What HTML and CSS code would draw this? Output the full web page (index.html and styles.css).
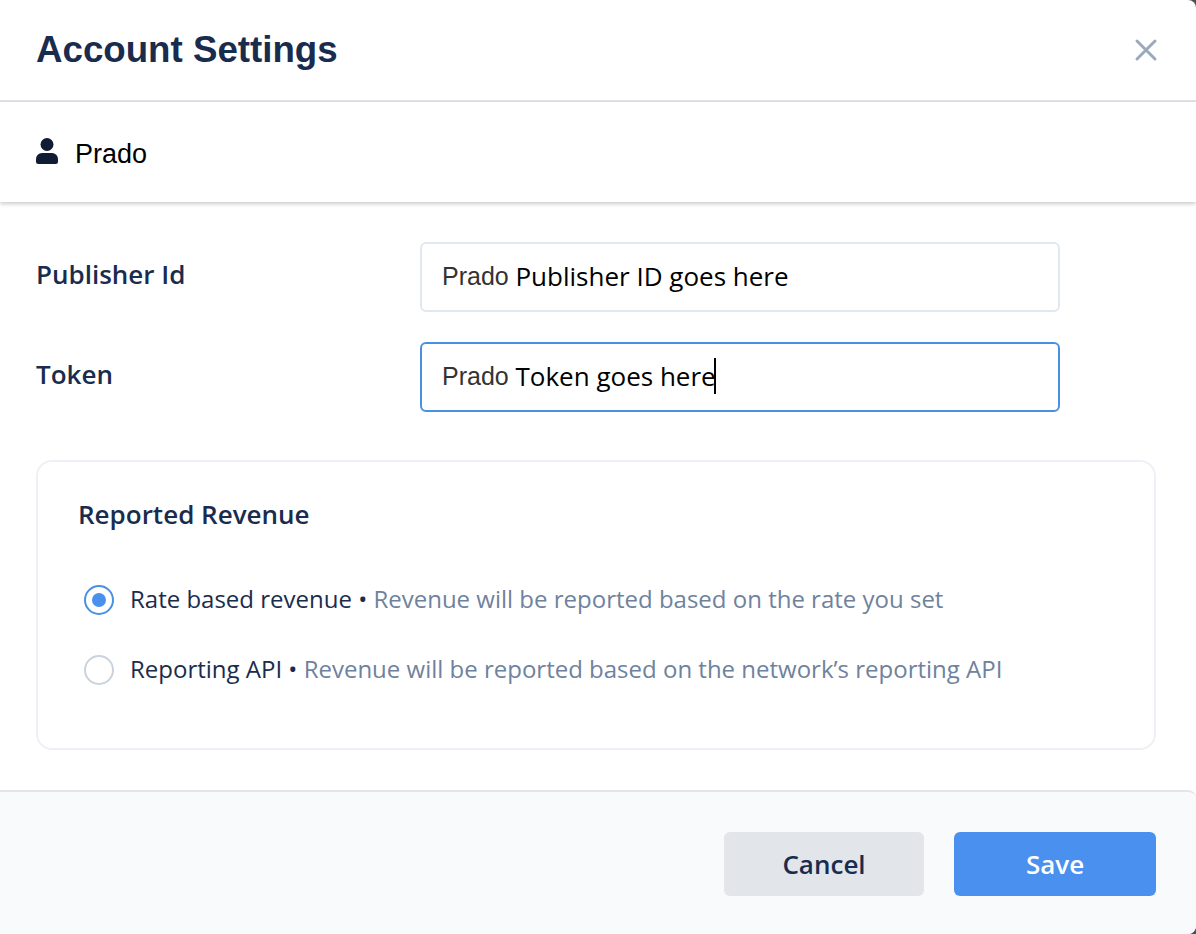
FILE: index.html
```html
<!DOCTYPE html>
<html lang="en">
  <head>
    <meta charset="UTF-8" />
    <title>Account Settings</title>
    <link rel="stylesheet" href="styles.css">
  </head>
  <body>
    <div class="modal">
      <header class="modal-header">
        <h1>Account Settings</h1>
        <svg class="close-icon" width="24" height="24" viewBox="0 0 24 24">
          <path d="M3 3L21 21M21 3L3 21" />
        </svg>
      </header>

      <div class="network-row">
        <svg class="user-icon" width="22" height="26" viewBox="0 0 22 26">
          <circle cx="11" cy="6.5" r="6.5" />
          <path d="M6 15h10a6 6 0 0 1 6 6v2.5a2.5 2.5 0 0 1-2.5 2.5h-17A2.5 2.5 0 0 1 0 23.5V21a6 6 0 0 1 6-6z" />
        </svg>
        <span>Prado</span>
      </div>

      <form class="modal-body">
        <div class="field">
          <label>Publisher Id</label>
          <div class="input"><span class="prefix">Prado</span> Publisher ID goes here</div>
        </div>
        <div class="field">
          <label>Token</label>
          <div class="input focused"><span class="prefix">Prado</span> Token goes here<span class="caret"></span></div>
        </div>

        <section class="card">
          <h2>Reported Revenue</h2>
          <div class="option">
            <span class="radio checked"></span>
            <span class="option-text">Rate based revenue • <span class="hint">Revenue will be reported based on the rate you set</span></span>
          </div>
          <div class="option">
            <span class="radio"></span>
            <span class="option-text">Reporting API • <span class="hint">Revenue will be reported based on the network’s reporting API</span></span>
          </div>
        </section>
      </form>

      <footer class="modal-footer">
        <button type="button" class="btn btn-cancel">Cancel</button>
        <button type="button" class="btn btn-save">Save</button>
      </footer>
    </div>
  </body>
</html>
```

FILE: styles.css
```css
* {
  box-sizing: border-box;
}

body {
  margin: 0;
  background-color: #4a4f57;
  font-family: "Open Sans", sans-serif;
  color: #1a2c4e;
}

.modal {
  width: 1196px;
  height: 934px;
  background-color: #fff;
  border-radius: 0 8px 8px 0;
  overflow: hidden;
  display: flex;
  flex-direction: column;
}

.modal-header {
  height: 102px;
  padding: 0 38px 0 36px;
  border-bottom: 2px solid #e0e2e7;
  display: flex;
  align-items: center;
  justify-content: space-between;
}

h1 {
  margin: 0;
  font-family: "Liberation Sans", sans-serif;
  font-size: 36.7px;
  font-weight: 700;
  color: #1a2c4e;
}

.close-icon path {
  stroke: #9aa9bb;
  stroke-width: 3;
  stroke-linecap: round;
  fill: none;
}

.network-row {
  height: 100px;
  padding: 4px 0 0 36px;
  display: flex;
  align-items: center;
  gap: 17px;
  font-family: "Liberation Sans", sans-serif;
  font-size: 27px;
  color: #000;
  box-shadow: 0 2px 4px rgba(0, 0, 0, 0.2);
}

.user-icon {
  fill: #0f1c33;
  margin-top: -6px;
}

.modal-body {
  flex: 1;
  padding: 40px 40px 40px 36px;
  display: flex;
  flex-direction: column;
}

.field {
  display: flex;
  align-items: center;
  height: 70px;
  margin-bottom: 30px;
}

.field label {
  width: 384px;
  margin-top: -6px;
  font-size: 26px;
  font-weight: 600;
}

.input {
  width: 640px;
  height: 70px;
  padding: 0 20px 2px;
  border: 2px solid #e2e8f0;
  border-radius: 6px;
  display: flex;
  align-items: center;
  white-space: pre;
  font-size: 26px;
  color: #000;
}

.input.focused {
  border-color: #4a90e2;
}

.prefix {
  font-family: "Liberation Sans", sans-serif;
  font-size: 25px;
  color: #333;
}

.caret {
  width: 2px;
  height: 36px;
  margin-left: -2px;
  background-color: #000;
}

.card {
  height: 290px;
  margin-top: 18px;
  padding: 34px 40px;
  border: 2px solid #edf0f4;
  border-radius: 16px;
}

h2 {
  margin: 0 0 34px;
  font-size: 26px;
  font-weight: 600;
  line-height: 36px;
}

.option {
  height: 70px;
  display: flex;
  align-items: center;
  gap: 16px;
  padding-left: 6px;
  font-size: 24px;
}

.option-text {
  margin-top: -5px;
}

.hint {
  color: #6f829d;
}

.radio {
  width: 30px;
  height: 30px;
  margin-top: -3px;
  border: 2px solid #c8d3de;
  border-radius: 50%;
  display: flex;
  align-items: center;
  justify-content: center;
}

.radio.checked {
  border-color: #4a90e2;
}

.radio.checked::after {
  content: "";
  width: 14px;
  height: 14px;
  background-color: #4a90ee;
  border-radius: 50%;
}

.modal-footer {
  height: 144px;
  padding: 40px 40px 0 0;
  border-top: 2px solid #e2e5ea;
  border-radius: 0 8px 0 0;
  background-color: #f8fafb;
  display: flex;
  justify-content: flex-end;
  gap: 30px;
}

.btn {
  height: 64px;
  border: none;
  border-radius: 6px;
  font-family: "Open Sans", sans-serif;
  font-size: 26px;
  font-weight: 600;
  cursor: pointer;
}

.btn-cancel {
  width: 200px;
  background-color: #e2e5ea;
  color: #1a2c4e;
}

.btn-save {
  width: 202px;
  background-color: #4a90ee;
  color: #fff;
}
```
